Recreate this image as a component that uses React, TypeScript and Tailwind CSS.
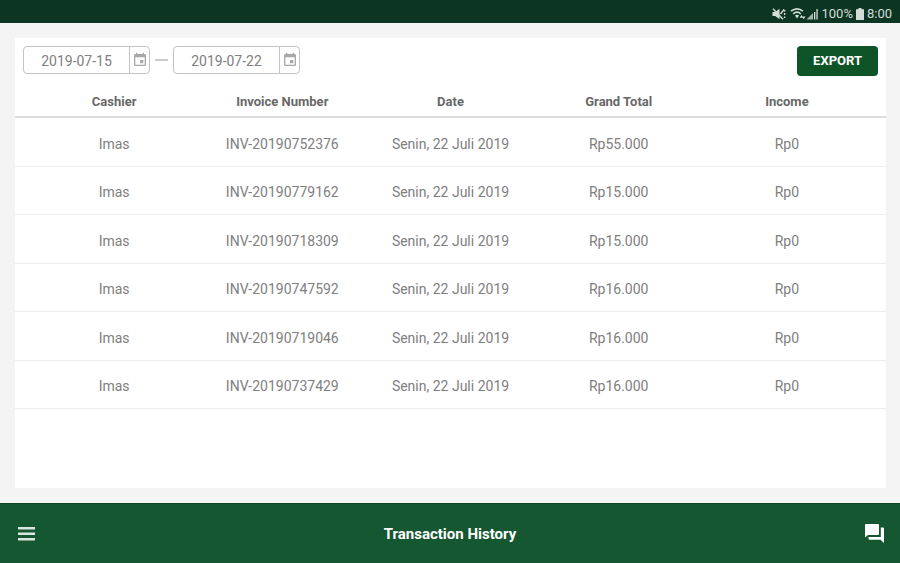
import { useState } from 'react'
import { MdEvent } from 'react-icons/md'

interface Transaction {
  cashier: string
  invoice: string
  date: string
  total: string
  income: string
}

const HEADERS = ['Cashier', 'Invoice Number', 'Date', 'Grand Total', 'Income']

const TRANSACTIONS: Transaction[] = [
  { cashier: 'Imas', invoice: 'INV-20190752376', date: 'Senin, 22 Juli 2019', total: 'Rp55.000', income: 'Rp0' },
  { cashier: 'Imas', invoice: 'INV-20190779162', date: 'Senin, 22 Juli 2019', total: 'Rp15.000', income: 'Rp0' },
  { cashier: 'Imas', invoice: 'INV-20190718309', date: 'Senin, 22 Juli 2019', total: 'Rp15.000', income: 'Rp0' },
  { cashier: 'Imas', invoice: 'INV-20190747592', date: 'Senin, 22 Juli 2019', total: 'Rp16.000', income: 'Rp0' },
  { cashier: 'Imas', invoice: 'INV-20190719046', date: 'Senin, 22 Juli 2019', total: 'Rp16.000', income: 'Rp0' },
  { cashier: 'Imas', invoice: 'INV-20190737429', date: 'Senin, 22 Juli 2019', total: 'Rp16.000', income: 'Rp0' },
]

function StatusBar() {
  return (
    <header className="h-[23px] shrink-0 bg-[#0c3522] flex items-center justify-end pr-2 pt-1 text-[#d3ddd7] text-[13px] leading-4">
      <svg viewBox="0 0 14 12" className="w-3.5 h-3 mr-1">
        <path d="M0.5 4h2.7L7.5 0.8v10.4L3.2 8H0.5z" fill="currentColor" />
        <path d="M1 0.8l10 10.4M8.5 6l3.6-4.6M12.6 2v1.6M12.6 5v2M12.6 8.4V10" fill="none" stroke="currentColor" strokeWidth="1.4" />
      </svg>
      <svg viewBox="0 0 16 12" className="w-4 h-3">
        <path d="M1 3.2Q7 -1.4 13 3.2M3.2 5.8Q7 2.6 10.8 5.8" fill="none" stroke="currentColor" strokeWidth="1.7" />
        <path d="M5 7.6Q7 6 9 7.6L7 10.4Z" fill="currentColor" />
        <path d="M9.6 9.8l1.8-2.8 1.8 2.8zM12 8.4h3.6L13.8 11.2z" fill="currentColor" />
      </svg>
      <svg viewBox="0 0 12 12" className="w-3 h-3 mr-[3px]">
        <path d="M0.5 11.5L7 5v6.5z" fill="currentColor" opacity="0.75" />
        <path d="M8 4h1.3v7.5H8zM10.4 1h1.3v10.5h-1.3z" fill="currentColor" />
      </svg>
      <span>100%</span>
      <svg viewBox="0 0 8 12" className="w-2 h-3 mx-[3px]">
        <path d="M2.5 0h3v1.2H8V12H0V1.2h2.5z" fill="currentColor" />
      </svg>
      <span>8:00</span>
    </header>
  )
}

interface DateFieldProps {
  label: string
  value: string
  onChange: (value: string) => void
}

function DateField({ label, value, onChange }: DateFieldProps) {
  return (
    <div className="w-[127px] h-7 flex border border-[#c4c4c4] rounded-sm overflow-hidden">
      <input
        type="text"
        aria-label={label}
        value={value}
        onChange={(e) => onChange(e.target.value)}
        className="flex-1 min-w-0 pt-px text-center text-sm text-[#808080] outline-none"
      />
      <button
        type="button"
        aria-label={`Pick ${label.toLowerCase()}`}
        className="w-5 border-l border-[#c4c4c4] flex items-center justify-center text-[#a8a8a8]"
      >
        <MdEvent className="w-4 h-4" />
      </button>
    </div>
  )
}

export default function App() {
  const [startDate, setStartDate] = useState('2019-07-15')
  const [endDate, setEndDate] = useState('2019-07-22')

  return (
    <div className="min-h-screen flex flex-col bg-[#f4f4f4] font-[Roboto,sans-serif]">
      <StatusBar />

      <main className="flex-1 flex flex-col p-[15px] pr-3.5">
        <section className="flex-1 bg-white">
          <div className="flex items-start justify-between px-2 pt-2 pb-1">
            <div className="flex items-center">
              <DateField label="Start date" value={startDate} onChange={setStartDate} />
              <span className="w-[13px] h-0.5 mx-[5px] bg-[#cccccc]" />
              <DateField label="End date" value={endDate} onChange={setEndDate} />
            </div>
            <button
              type="button"
              className="h-[30px] px-4 rounded-sm bg-[#0f5429] text-white text-[13px] leading-5 font-bold"
            >
              EXPORT
            </button>
          </div>

          <table className="block w-full text-sm leading-5 text-[#808080]">
            <thead className="block">
              <tr className="flex px-[15px] pt-3 pb-1 border-b-2 border-[#dddddd] text-[13px] text-[#686868]">
                {HEADERS.map((header) => (
                  <th key={header} scope="col" className="flex-1 font-bold text-center">
                    {header}
                  </th>
                ))}
              </tr>
            </thead>
            <tbody className="grid auto-rows-fr min-h-[291px]">
              {TRANSACTIONS.map((item) => (
                <tr
                  key={item.invoice}
                  className="flex items-center px-[15px] pt-1 border-b border-[#eeeeee] text-center"
                >
                  <td className="flex-1">{item.cashier}</td>
                  <td className="flex-1">{item.invoice}</td>
                  <td className="flex-1">{item.date}</td>
                  <td className="flex-1">{item.total}</td>
                  <td className="flex-1">{item.income}</td>
                </tr>
              ))}
            </tbody>
          </table>
        </section>
      </main>

      <nav className="h-[60px] shrink-0 px-3.5 bg-[#155730] border-t border-[#0d4524] flex items-center justify-between text-white">
        <button type="button" aria-label="Menu" className="text-[#dce6e0]">
          <svg viewBox="0 0 24 24" className="w-6 h-6">
            <path d="M4 5h17v2.5H4zM4 10.5h17V13H4zM4 16h17v2.5H4z" fill="currentColor" />
          </svg>
        </button>
        <h1 className="text-[15px] leading-5 font-bold">Transaction History</h1>
        <button type="button" aria-label="Messages">
          <svg viewBox="0 0 24 24" className="w-6 h-6">
            <path
              d="M4 2h12a1 1 0 0 1 1 1v9a1 1 0 0 1-1 1H6l-3 2.5V3a1 1 0 0 1 1-1zM18.8 5.5H21a1 1 0 0 1 1 1V21l-3.5-3.2H7.500a1 1 0 0 1-1-1V15h12.300z"
              fill="currentColor"
            />
          </svg>
        </button>
      </nav>
    </div>
  )
}
